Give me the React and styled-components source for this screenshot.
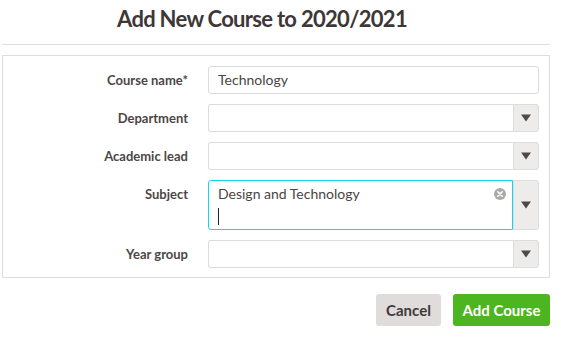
import React from "react";
import styled, { createGlobalStyle } from "styled-components";

const Global = createGlobalStyle`
  html, body { margin: 0; padding: 0; background: #fff; }
  body { font-family: "Lato", "Noto Sans", sans-serif; color: #4a4444; }
  * { box-sizing: border-box; }
`;

const Page = styled.div`
  width: 548px;
  margin-left: 2px;
`;

const Header = styled.div`
  height: 45px;
  border-bottom: 1px solid #dedede;
  display: flex;
  justify-content: center;
  padding-right: 28px;
`;

const Title = styled.h1`
  margin: 0;
  padding-top: 4px;
  font-size: 22px;
  letter-spacing: -0.7px;
  font-weight: 700;
  color: #3d3737;
  line-height: 29px;
`;

const Panel = styled.div`
  margin-top: 10px;
  border: 1px solid #dedede;
  padding: 10px 10px 9px 0;
  display: grid;
  grid-template-columns: 185px 1fr;
  column-gap: 20px;
  row-gap: 10px;
`;

const Label = styled.label`
  font-size: 13px;
  font-weight: 700;
  color: #4d4646;
  text-align: right;
  line-height: 28px;
  align-self: start;
`;

const TextInput = styled.div`
  height: 28px;
  border: 1px solid #dcdcdc;
  border-radius: 3px;
  padding: 0 9px;
  font-size: 14px;
  line-height: 26px;
  color: #4a4444;
`;

const SelectWrap = styled.div`
  display: flex;
  height: ${(p) => p.$h || 28}px;
`;

const SelectField = styled.div`
  flex: 1;
  position: relative;
  border: 1px solid ${(p) => (p.$focus ? "#14d6e9" : "#dcdcdc")};
  border-right: ${(p) => (p.$focus ? "1px solid #14d6e9" : "none")};
  border-radius: 3px 0 0 3px;
  padding: 0 9px;
  font-size: 14px;
  line-height: 26px;
  color: #4a4444;
`;

const ArrowBox = styled.div`
  width: 26px;
  background: #eeeceb;
  border: 1px solid #dcdcdc;
  border-radius: 0 3px 3px 0;
  display: flex;
  align-items: center;
  justify-content: center;
`;

const Caret = styled.span`
  display: block;
  width: 1px;
  height: 17px;
  background: #222;
  margin-top: 1px;
`;

const Clear = styled.span`
  position: absolute;
  right: 6px;
  top: 7px;
  width: 12px;
  height: 12px;
  display: flex;
`;

const Actions = styled.div`
  display: flex;
  justify-content: flex-end;
  gap: 12px;
  margin-top: 16px;
`;

const Button = styled.button`
  height: 32px;
  border: none;
  border-radius: 3px;
  font-family: inherit;
  font-size: 15px;
  font-weight: 700;
  padding: 0;
  width: ${(p) => p.$w}px;
  background: ${(p) => (p.$primary ? "#4cb520" : "#e0dcdb")};
  color: ${(p) => (p.$primary ? "#fff" : "#3f3939")};
`;

const Arrow = () => (
  <svg width="10" height="8" viewBox="0 0 10 8">
    <path d="M0 0.5 L10 0.5 L5 7.5 Z" fill="#4f4a4a" />
  </svg>
);

const ClearIcon = () => (
  <svg width="12" height="12" viewBox="0 0 12 12">
    <circle cx="6" cy="6" r="6" fill="#acaaa9" />
    <path d="M3.8 3.8 L8.2 8.2 M8.2 3.8 L3.8 8.2" stroke="#fff" strokeWidth="1.6" strokeLinecap="round" />
  </svg>
);

const Select = ({ children, focus, h }) => (
  <SelectWrap $h={h}>
    <SelectField $focus={focus}>{children}</SelectField>
    <ArrowBox>
      <Arrow />
    </ArrowBox>
  </SelectWrap>
);

export default function App() {
  return (
    <>
      <Global />
      <Page>
        <Header>
          <Title>Add New Course to 2020/2021</Title>
        </Header>
        <Panel>
          <Label>Course name*</Label>
          <TextInput>Technology</TextInput>
          <Label>Department</Label>
          <Select />
          <Label>Academic lead</Label>
          <Select />
          <Label>Subject</Label>
          <Select focus h={50}>
            <div>Design and Technology</div>
            <Caret />
            <Clear>
              <ClearIcon />
            </Clear>
          </Select>
          <Label>Year group</Label>
          <Select />
        </Panel>
        <Actions>
          <Button $w={65}>Cancel</Button>
          <Button $primary $w={97}>Add Course</Button>
        </Actions>
      </Page>
    </>
  );
}
